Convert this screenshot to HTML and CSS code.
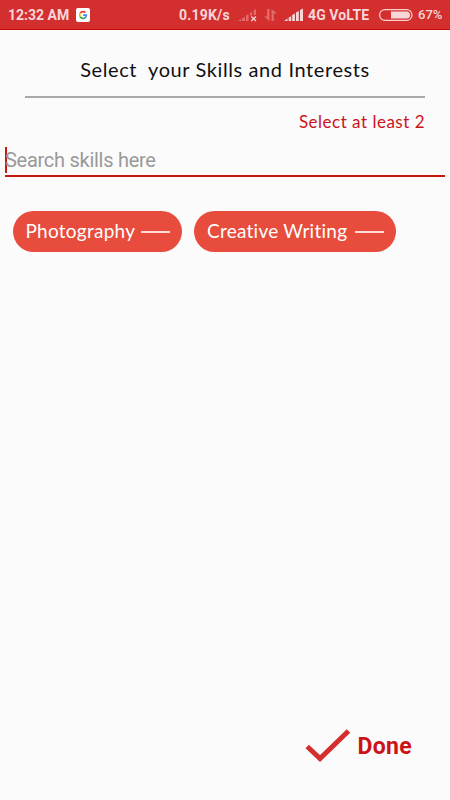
FILE: index.html
```html
<!DOCTYPE html>
<html>
<head>
  <title>Skills and Interests</title>
  <meta charset="utf-8">
  <meta name="viewport" content="width=device-width, initial-scale=1.0">
  <link rel="stylesheet" href="styles.css">
</head>
<body>
  <div class="status-bar">
    <span class="time">12:32 AM</span>
    <svg class="google" width="14" height="14" viewBox="0 0 14 14" fill="none" stroke-width="1.7">
      <rect width="14" height="14" rx="2" fill="#fff"/>
      <path d="M9.4 4.6A3.3 3.3 0 0 0 4.2 5.2" stroke="#ea4335"/>
      <path d="M4.2 5.2A3.3 3.3 0 0 0 4.2 8.8" stroke="#fbbc05"/>
      <path d="M4.2 8.8A3.3 3.3 0 0 0 9.2 9.6" stroke="#34a853"/>
      <path d="M9.2 9.6A3.3 3.3 0 0 0 10.3 7.2H7.2" stroke="#4285f4"/>
    </svg>
    <span class="speed">0.19K/s</span>
    <svg class="no-signal" width="20" height="14" viewBox="0 0 20 14">
      <path d="M0 13L3 11V13ZM4 10.5L7 9V13H4ZM8 7.5L10.5 6V13H8ZM12 5L14 3.8V7.5H12ZM15.5 2.5L18 1V7H15.5Z" fill="#e26b6b"/>
      <path d="M13.3 8.5L18 13M18 8.5L13.3 13" stroke="#f8d2d2" stroke-width="1.3"/>
    </svg>
    <svg class="data" width="13" height="14" viewBox="0 0 13 14" fill="#e26b6b">
      <path d="M3.2 1H5.5V13L0 8.5H3.2ZM7.5 13V1L13 5.5H9.8V13Z"/>
    </svg>
    <svg class="signal" width="20" height="14" viewBox="0 0 20 14" fill="#f8d7d7">
      <path d="M0 13L3.5 10.5V13ZM4.7 9.5L7.2 8.3V13H4.7ZM8.2 7L10.9 5.6V13H8.2ZM12 4.5L14.8 3V13H12ZM16 2L19 .5V13H16Z"/>
    </svg>
    <span class="network">4G VoLTE</span>
    <svg class="battery" width="34" height="12" viewBox="0 0 34 12">
      <rect x=".6" y=".6" width="32.4" height="10.8" rx="5.4" fill="none" stroke="#f8d2d2" stroke-width="1.2"/>
      <path d="M12 2.5H27.5A3.5 3.5 0 0 1 27.5 9.5H12Z" fill="#f8d7d7"/>
    </svg>
    <span class="percent">67%</span>
  </div>

  <div class="header">
    <h1>Select&nbsp; your Skills and Interests</h1>
    <p class="hint">Select at least 2</p>
  </div>

  <div class="search"><span class="placeholder">Search skills here</span></div>

  <div class="tags">
    <div class="tag photography"><span>Photography</span><i class="minus"></i></div>
    <div class="tag writing"><span>Creative Writing</span><i class="minus"></i></div>
  </div>

  <div class="done">
    <svg width="46" height="36" viewBox="0 0 46 36" fill="none" stroke="#d32f2f" stroke-width="5">
      <path d="M2.2 18.5L15 30.5L43.5 3"/>
    </svg>
    <span>Done</span>
  </div>
</body>
</html>
```
FILE: styles.css
```css
* {box-sizing: border-box; margin: 0; padding: 0;}
body {display: flex; flex-direction: column; height: 100vh; overflow: hidden; background: #fbfbfb; font-family: Roboto, sans-serif;}
svg {display: block; flex: none;}

.status-bar {display: flex; align-items: center; height: 30px; flex: none; padding: 1px 0 0 8px; background: #d32f2f; border-bottom: 1px solid #c60808; color: #f8d7d7; font-size: 14px; font-weight: 700; line-height: 16px; white-space: nowrap;}
.time {width: 62px;}
.google {margin-left: 6px;}
.speed {width: 51px; margin-left: 89px; letter-spacing: 0.2px;}
.no-signal {margin-left: 8px;}
.data {margin-left: 6px;}
.signal {margin-left: 7px;}
.network {width: 64px; margin-left: 4px; letter-spacing: 0.1px;}
.battery {margin-left: 7px;}
.percent {margin-left: 5px; font-size: 13px; font-weight: 500;}

.header {margin: 0 25px; flex: none;}
.header h1 {height: 68px; padding-top: 26px; border-bottom: 2px solid #aaa; color: #111; font-family: Lato, sans-serif; font-size: 20px; font-weight: 400; line-height: 26px; text-align: center; letter-spacing: 0.6px; white-space: nowrap;}
.hint {height: 49px; padding-top: 13px; color: #cc1219; font-family: Lato, sans-serif; font-size: 17px; line-height: 22px; text-align: right; letter-spacing: 0.5px;}

.search {height: 30px; flex: none; margin: 0 5px; border-bottom: 2px solid #c41a0a; color: #999; font-size: 20px; line-height: 26px;}
.placeholder {display: block; height: 26px; border-left: 2px solid #c41a0a; text-indent: -2px; letter-spacing: -0.27px;}

.tags {display: flex; gap: 12px; margin: 34px 0 0 12.5px;}
.tag {display: flex; align-items: center; justify-content: space-between; height: 41px; padding: 0 12px 0 13px; border-radius: 21px; background: #e74c3c; color: #fff; font-family: Lato, sans-serif; font-size: 19px; font-variant-ligatures: none; white-space: nowrap;}
.tag span {margin-top: -2px; letter-spacing: 0.25px;}
.photography {width: 169.5px;}
.writing {width: 202px;}
.minus {width: 29px; height: 2px; background: #fbdcd8;}

.done {display: flex; align-items: center; align-self: flex-end; margin: auto 38px 36px 0; color: #cc1219; font-size: 23px; font-weight: 700;}
.done span {margin-left: 7px; letter-spacing: 0.3px;}
```
